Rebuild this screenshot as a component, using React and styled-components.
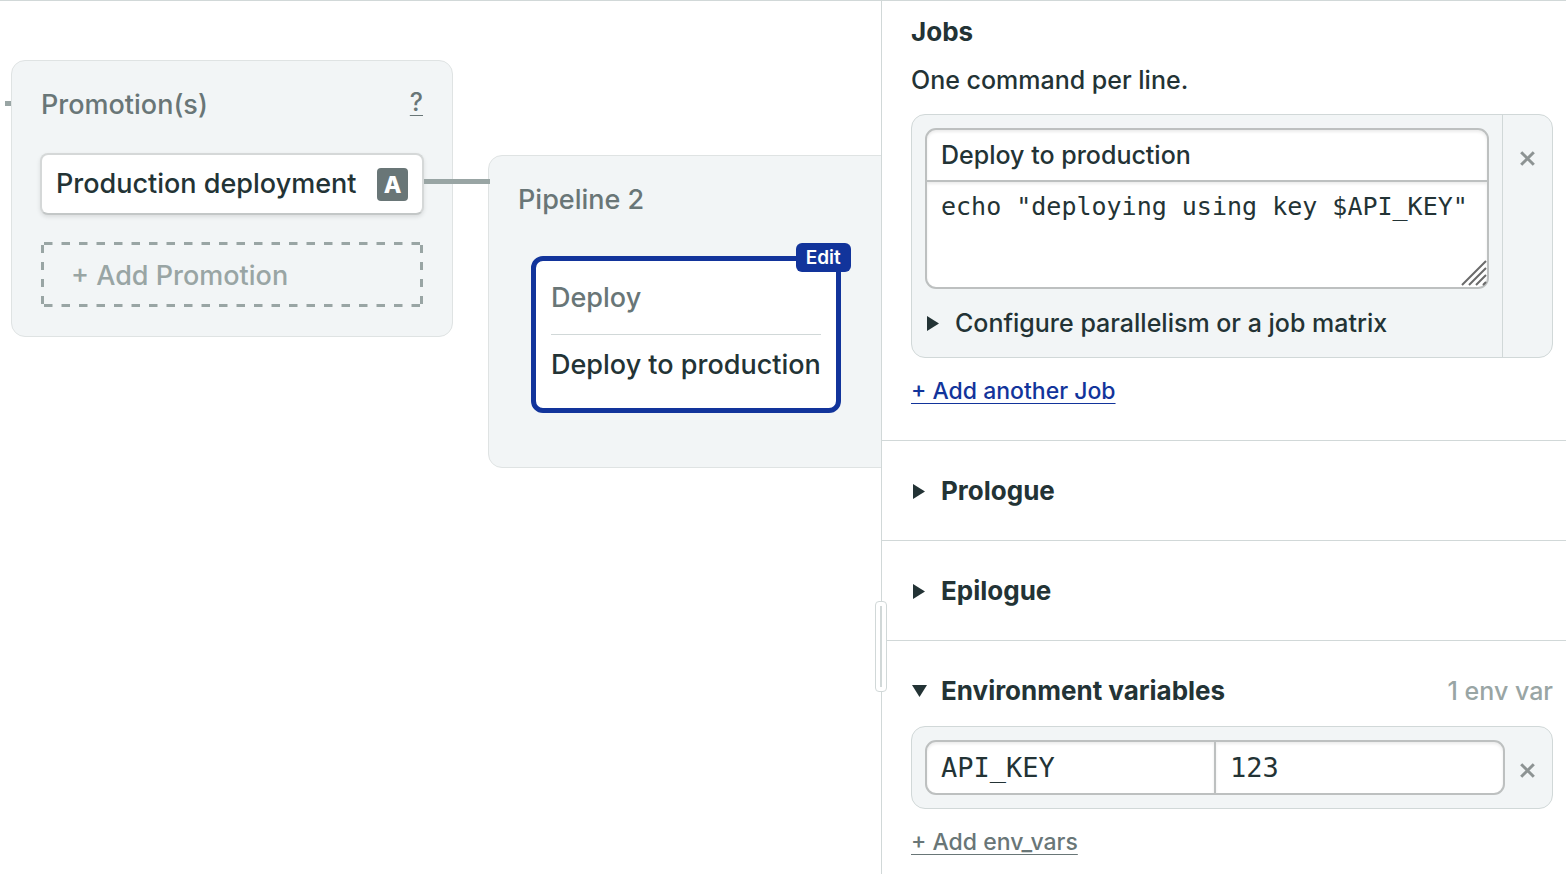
import React, { useState } from 'react';
import styled, { createGlobalStyle, css } from 'styled-components';

const ink = '#233335';
const muted = '#697677';
const faint = '#99a5a4';
const surface = '#f2f5f6';
const line = '#d1d8d8';
const fieldLine = '#bdc0c0';
const blue = '#12349b';
const mono = '"DejaVu Sans Mono", "Liberation Mono", monospace';

const GlobalStyle = createGlobalStyle`
  *, *::before, *::after { box-sizing: border-box; }
  body {
    margin: 0;
    background: #fff;
    color: ${ink};
    font-family: Inter, "Liberation Sans", sans-serif;
    font-size: 25px;
    font-weight: 500;
    line-height: 32px;
  }
  button, input, textarea { margin: 0; font: inherit; color: inherit; }
  button { cursor: pointer; }
`;

const Page = styled.div`
  display: flex;
  min-height: 100vh;
  border-top: 1px solid ${line};
`;

/* ---------- workflow canvas ---------- */

const Canvas = styled.main`
  position: relative;
  flex: 1;
  min-width: 0;
  overflow: hidden;
`;

const Connector = styled.div`
  position: absolute;
  left: ${(p) => p.$x}px;
  top: ${(p) => p.$y}px;
  width: ${(p) => p.$length}px;
  height: 5px;
  background: ${faint};
`;

const Node = styled.section`
  position: absolute;
  left: ${(p) => p.$x}px;
  top: ${(p) => p.$y}px;
  width: 442px;
  padding: 28px 28px 29px;
  background: ${surface};
  border: 1px solid #dfe3e3;
  border-radius: 14px;
`;

const NodeHeader = styled.header`
  display: flex;
  justify-content: space-between;
  margin-bottom: 32px;
  padding: 0 1px;
  color: ${muted};
`;

const NodeTitle = styled.h2`
  margin: 0;
  font-size: 27px;
  font-weight: 500;
  line-height: 32px;
`;

const HelpLink = styled.a`
  color: ${muted};
  font-size: 25px;
  line-height: 26px;
  text-underline-offset: 4px;
  text-decoration-thickness: 1px;
`;

const Promotion = styled.button`
  display: flex;
  align-items: center;
  justify-content: space-between;
  width: 100%;
  height: 62px;
  padding: 0 14px;
  background: #fff;
  border: 2px solid #d5d8d8;
  border-bottom-color: #c3c7c7;
  border-radius: 8px;
  box-shadow: 0 2px 4px rgba(0, 0, 0, 0.1);
  font-size: 27px;
`;

const AutoBadge = styled.span`
  width: 31px;
  height: 33px;
  background: ${muted};
  border-radius: 4px;
  color: #fff;
  font-size: 23px;
  font-weight: 800;
  line-height: 34px;
  text-align: center;
`;

const AddPromotion = styled.button`
  position: relative;
  display: block;
  width: calc(100% - 2px);
  height: 65px;
  margin: 27px 1px 0;
  padding: 2px 30px 0;
  background: none;
  border: 0;
  color: ${faint};
  font-size: 27px;
  text-align: left;
`;

const DashedFrame = styled.svg`
  position: absolute;
  inset: 0;
  width: 100%;
  height: 100%;
  fill: none;
  stroke: ${faint};
  stroke-width: 3;
`;

const Block = styled.div`
  position: relative;
  width: fit-content;
  margin: 40px 14px 25px;
  padding: 21px 15px 27px;
  background: #fff;
  border: 5px solid ${blue};
  border-radius: 12px;
`;

const BlockName = styled.h3`
  margin: 0 0 14px;
  padding-bottom: 20px;
  border-bottom: 1px solid ${line};
  color: ${muted};
  font-size: 27px;
  font-weight: 500;
  line-height: 32px;
`;

const BlockJob = styled.p`
  margin: 0;
  font-size: 27px;
  line-height: 32px;
  white-space: nowrap;
`;

const EditBadge = styled.button`
  position: absolute;
  top: -18px;
  right: -15px;
  height: 29px;
  padding: 0 10px;
  background: ${blue};
  border: 0;
  border-radius: 6px;
  color: #fff;
  font-size: 19px;
  font-weight: 600;
  line-height: 29px;
`;

/* ---------- settings panel ---------- */

const Panel = styled.aside`
  position: relative;
  flex: 0 0 685px;
  background: #fff;
  border-left: 1px solid ${line};
`;

const ResizeHandle = styled.div`
  position: absolute;
  top: 600px;
  left: -7px;
  display: flex;
  justify-content: center;
  width: 12px;
  height: 91px;
  padding: 4px 0;
  background: #fff;
  border: 1px solid ${line};
  border-radius: 4px;
  cursor: col-resize;

  &::before {
    content: '';
    width: 2px;
    background: ${line};
  }
`;

const Section = styled.section`
  padding: 15px 13px 33px 29px;
  border-bottom: 1px solid ${line};
`;

const Heading = styled.h2`
  margin: 0;
  font-size: 26px;
  font-weight: 700;
  line-height: 32px;
`;

const Hint = styled.p`
  margin: 16px 0 18px;
`;

const Collapsible = styled.details`
  padding: 34px 13px 33px 29px;
  border-bottom: ${(p) => (p.$last ? '0' : `1px solid ${line}`)};
`;

const Summary = styled.summary`
  display: flex;
  align-items: center;
  list-style: none;
  cursor: pointer;
  &::-webkit-details-marker { display: none; }
`;

const Marker = styled.svg`
  flex: none;
  width: 15px;
  height: 15px;
  margin: 0 14px 0 1px;
  fill: ${ink};
  details[open] > summary > & { transform: rotate(90deg); }
`;

const Count = styled.span`
  margin-left: auto;
  color: ${faint};
`;

const Card = styled.div`
  display: grid;
  grid-template-columns: 1fr ${(p) => p.$side}px;
  background: ${surface};
  border: 1px solid ${line};
  border-radius: 14px;
`;

const JobFields = styled.div`
  min-width: 0;
  padding: 13px 13px 18px;
`;

const field = css`
  display: block;
  width: 100%;
  background: #fff;
  border: 2px solid ${fieldLine};
  box-shadow: inset 0 2px 3px rgba(0, 0, 0, 0.08);
  outline: 0;
`;

const JobName = styled.input`
  ${field}
  height: 54px;
  padding: 0 14px;
  border-radius: 11px 11px 0 0;
`;

const CommandBox = styled.div`
  position: relative;
  margin: -2px 0 18px;
`;

const Commands = styled.textarea`
  ${field}
  height: 109px;
  padding: 9px 10px 9px 14px;
  border-radius: 0 0 11px 11px;
  font-family: ${mono};
  font-size: 25px;
  font-weight: 400;
  line-height: 32px;
  white-space: pre;
  overflow: hidden;
  resize: none;
`;

const Grip = styled.svg`
  position: absolute;
  right: 2px;
  bottom: 3px;
  width: 26px;
  height: 26px;
  stroke: #6b6b6b;
  stroke-width: 2;
  pointer-events: none;
`;

const RemoveCell = styled.div`
  display: flex;
  justify-content: center;
  padding: ${(p) => (p.$divided ? '29px 0 0' : '29px 2px 0 0')};
  border-left: ${(p) => (p.$divided ? `1px solid ${line}` : '0')};
`;

const RemoveButton = styled.button`
  display: flex;
  width: 29px;
  height: 29px;
  padding: 7px;
  background: none;
  border: 0;

  svg {
    width: 15px;
    height: 15px;
    stroke: #8d9393;
    stroke-width: 3;
  }
`;

const AddLink = styled.a`
  display: block;
  width: fit-content;
  margin-top: 17px;
  color: ${(p) => (p.$quiet ? muted : blue)};
  font-size: 23px;
  text-decoration-thickness: 1px;
  text-underline-offset: 4px;
`;

const EnvCard = styled(Card)`
  margin-top: 19px;
`;

const EnvFields = styled.div`
  display: flex;
  padding: 13px 0 13px 13px;
`;

const EnvInput = styled.input`
  ${field}
  flex: 1;
  min-width: 0;
  height: 55px;
  padding: 0 14px;
  font-family: ${mono};
  font-size: 27px;
  font-weight: 400;

  &:first-child { border-radius: 11px 0 0 11px; }
  &:last-child { margin-left: -2px; border-radius: 0 11px 11px 0; }
`;

const Disclosure = () => (
  <Marker viewBox="0 0 15 15" aria-hidden="true">
    <path d="M1 0 13 7.5 1 15z" />
  </Marker>
);

const Remove = ({ label }) => (
  <RemoveButton type="button" aria-label={label}>
    <svg viewBox="0 0 15 15" aria-hidden="true">
      <path d="M1.2 1.2 13.8 13.8M13.8 1.2 1.2 13.8" />
    </svg>
  </RemoveButton>
);

export default function App() {
  const [jobName, setJobName] = useState('Deploy to production');
  const [commands, setCommands] = useState('echo "deploying using key $API_KEY"');
  const [envName, setEnvName] = useState('API_KEY');
  const [envValue, setEnvValue] = useState('123');

  return (
    <>
      <GlobalStyle />
      <Page>
        <Canvas>
          <Connector $x={5} $y={100} $length={7} />
          <Node $x={11} $y={59}>
            <NodeHeader>
              <NodeTitle>Promotion(s)</NodeTitle>
              <HelpLink href="#promotions">?</HelpLink>
            </NodeHeader>
            <Promotion type="button">
              Production deployment
              <AutoBadge>A</AutoBadge>
            </Promotion>
            <AddPromotion type="button">
              <DashedFrame viewBox="0 0 382 65" preserveAspectRatio="none" aria-hidden="true">
                <path strokeDasharray="8.5 9" d="M3 1.5H379M3 63.5H379" />
                <path strokeDasharray="8 9" d="M1.5 3V62M380.5 3V62" />
              </DashedFrame>
              + Add Promotion
            </AddPromotion>
          </Node>
          <Node $x={488} $y={154}>
            <NodeHeader>
              <NodeTitle>Pipeline 2</NodeTitle>
            </NodeHeader>
            <Block>
              <BlockName>Deploy</BlockName>
              <BlockJob>{jobName}</BlockJob>
              <EditBadge type="button">Edit</EditBadge>
            </Block>
          </Node>
          <Connector $x={424} $y={178} $length={66} />
        </Canvas>

        <Panel>
          <Section>
            <Heading>Jobs</Heading>
            <Hint>One command per line.</Hint>
            <Card $side={50}>
              <JobFields>
                <JobName
                  aria-label="Job name"
                  value={jobName}
                  onChange={(e) => setJobName(e.target.value)}
                />
                <CommandBox>
                  <Commands
                    aria-label="Commands"
                    spellCheck={false}
                    value={commands}
                    onChange={(e) => setCommands(e.target.value)}
                  />
                  <Grip viewBox="0 0 26 26" aria-hidden="true">
                    <path d="M1 25 25 1M8 25 25 8M15 25 25 15M22 25 25 22" />
                  </Grip>
                </CommandBox>
                <details>
                  <Summary>
                    <Disclosure />
                    Configure parallelism or a job matrix
                  </Summary>
                </details>
              </JobFields>
              <RemoveCell $divided>
                <Remove label="Remove job" />
              </RemoveCell>
            </Card>
            <AddLink href="#add-job">+ Add another Job</AddLink>
          </Section>

          <Collapsible>
            <Summary>
              <Disclosure />
              <Heading>Prologue</Heading>
            </Summary>
          </Collapsible>
          <Collapsible>
            <Summary>
              <Disclosure />
              <Heading>Epilogue</Heading>
            </Summary>
          </Collapsible>
          <Collapsible open $last>
            <Summary>
              <Disclosure />
              <Heading>Environment variables</Heading>
              <Count>1 env var</Count>
            </Summary>
            <EnvCard $side={47}>
              <EnvFields>
                <EnvInput
                  aria-label="Variable name"
                  value={envName}
                  onChange={(e) => setEnvName(e.target.value)}
                />
                <EnvInput
                  aria-label="Variable value"
                  value={envValue}
                  onChange={(e) => setEnvValue(e.target.value)}
                />
              </EnvFields>
              <RemoveCell>
                <Remove label="Remove variable" />
              </RemoveCell>
            </EnvCard>
            <AddLink href="#add-env" $quiet>+ Add env_vars</AddLink>
          </Collapsible>

          <ResizeHandle role="separator" aria-orientation="vertical" aria-label="Resize panel" />
        </Panel>
      </Page>
    </>
  );
}
